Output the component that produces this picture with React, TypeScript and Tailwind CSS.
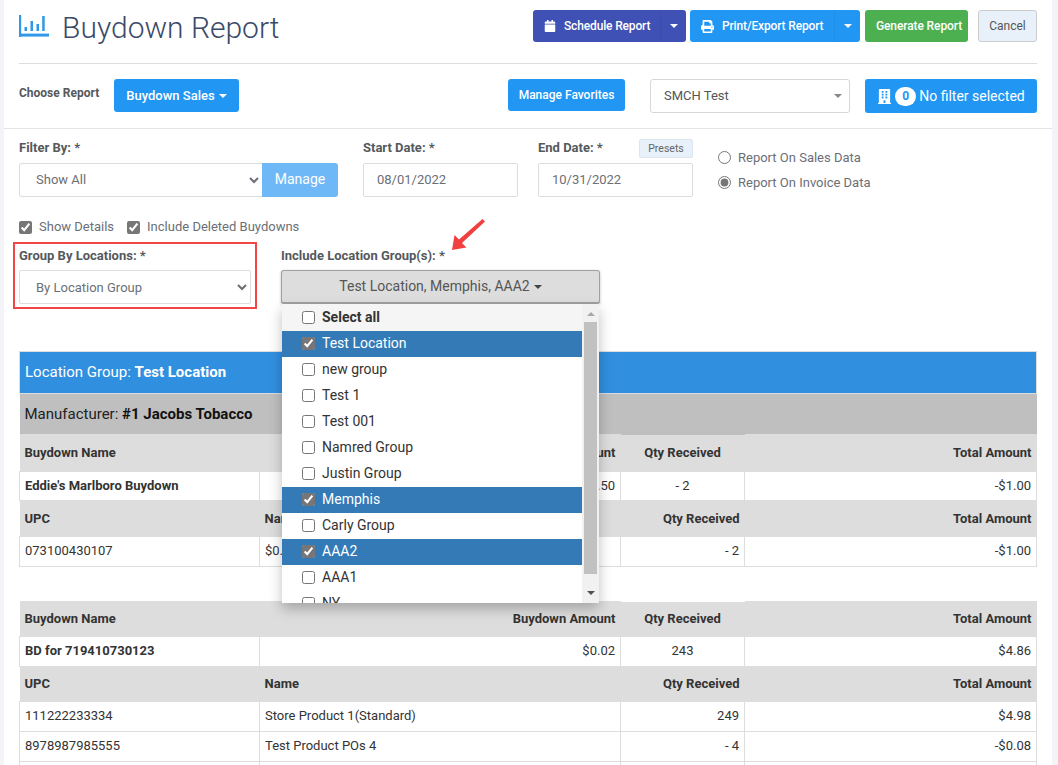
import { FaBuilding, FaCalendar, FaPrint } from 'react-icons/fa';

const locationGroups = [
  { name: 'Test Location', checked: true },
  { name: 'new group', checked: false },
  { name: 'Test 1', checked: false },
  { name: 'Test 001', checked: false },
  { name: 'Namred Group', checked: false },
  { name: 'Justin Group', checked: false },
  { name: 'Memphis', checked: true },
  { name: 'Carly Group', checked: false },
  { name: 'AAA2', checked: true },
  { name: 'AAA1', checked: false },
  { name: 'NY', checked: false },
];

const Caret = ({ className = 'border-t-white' }: { className?: string }) => (
  <span className={`inline-block w-0 h-0 border-x-[4px] border-x-transparent border-t-[4px] ${className}`} />
);

const Label = ({ children, className = '' }: { children: React.ReactNode; className?: string }) => (
  <label className={`block h-[24px] text-[13px] font-bold text-[#55595c] leading-[17px] ${className}`}>{children}</label>
);

const Check = ({ label }: { label: string }) => (
  <label className="flex items-center gap-[7px] text-[13px] text-[#6b6f76]">
    <input type="checkbox" defaultChecked readOnly className="m-0 w-[13px] h-[13px] accent-[#767676]" />
    {label}
  </label>
);

const Radio = ({ label, checked }: { label: string; checked?: boolean }) => (
  <label className="flex items-center gap-[7px] text-[13px] text-[#6b6f76] h-[25px]">
    <input type="radio" name="source" defaultChecked={checked} className="m-0 w-[13px] h-[13px] accent-[#767676]" />
    {label}
  </label>
);

const SplitButton = ({ icon, label, className, width }: { icon: React.ReactNode; label: string; className: string; width: string }) => (
  <div className={`flex h-[32px] rounded-[3px] text-white text-[12px] font-medium tracking-[-0.15px] ${className} ${width}`}>
    <button className="flex flex-1 items-center gap-[8px] pl-[11px]">
      {icon}
      {label}
    </button>
    <button className="flex w-[26px] items-center justify-center border-l border-black/5">
      <Caret />
    </button>
  </div>
);

const Head = ({ children, right }: { children?: React.ReactNode; right?: boolean }) => (
  <th className={`bg-[#dddddd] border-y border-[#dddddd] px-[5px] text-[13px] font-bold text-[#333] ${right ? 'text-right' : 'text-left'}`}>{children}</th>
);

const Cell = ({ children, align = 'left', bold }: { children?: React.ReactNode; align?: 'left' | 'right' | 'center'; bold?: boolean }) => (
  <td
    className={`border border-[#dddddd] px-[5px] pb-[1px] text-[13px] text-[#333] ${
      align === 'right' ? 'text-right' : align === 'center' ? 'text-center' : 'text-left'
    } ${bold ? 'font-bold' : ''}`}
  >
    {children}
  </td>
);

const Cols = () => (
  <colgroup>
    <col className="w-[240px]" />
    <col className="w-[361px]" />
    <col className="w-[124px]" />
    <col />
  </colgroup>
);

export default function App() {
  return (
    <div className="h-[765px] overflow-hidden bg-[#f3f3f8] font-['Roboto',sans-serif]">
      <div className="ml-[4px] mr-[6px] h-full bg-white">
        <div className="h-[129px] border-b border-[#e4e4e4] px-[15px]">
          <div className="flex h-[64px] border-b border-[#dddddd] pt-[10px]">
            <svg width="30" height="22" viewBox="0 0 30 22" className="mt-[5px] text-[#3198e8]" fill="currentColor">
              <rect x="0" y="0" width="2.2" height="22" />
              <rect x="0" y="18.6" width="30" height="3" />
              <rect x="5.5" y="12" width="2.5" height="4" />
              <rect x="11.5" y="6" width="2.5" height="10" />
              <rect x="17.5" y="9" width="2.5" height="7" />
              <rect x="23.2" y="1" width="2.5" height="15" />
            </svg>
            <h1 className="ml-[13px] mt-[1px] text-[30px] font-light leading-[34px] text-[#3b4a68]">Buydown Report</h1>
            <div className="ml-auto flex">
              <SplitButton icon={<FaCalendar size={12} />} label="Schedule Report" className="bg-[#3f51b5]" width="w-[153px]" />
              <SplitButton icon={<FaPrint size={13} />} label="Print/Export Report" className="ml-[4px] bg-[#2196f3]" width="w-[170px]" />
              <button className="ml-[5px] h-[32px] w-[103px] rounded-[3px] bg-[#4caf50] pl-[5px] text-[12px] font-medium tracking-[-0.1px] text-white">Generate Report</button>
              <button className="ml-[10px] h-[32px] w-[59px] rounded-[3px] border border-[#cccccc] bg-[#e8f1fa] text-[12px] text-[#555]">Cancel</button>
            </div>
          </div>
          <div className="flex items-start pt-[15px]">
            <span className="mt-[5px] w-[95px] text-[12px] font-bold text-[#55595c]">Choose Report</span>
            <button className="flex h-[33px] w-[125px] items-center justify-center gap-[4px] rounded-[3px] bg-[#2196f3] text-[13px] font-medium text-white">
              Buydown Sales <Caret />
            </button>
            <button className="ml-[269px] h-[32px] w-[117px] rounded-[3px] bg-[#2196f3] text-[12px] font-medium text-white">Manage Favorites</button>
            <div className="ml-[25px] flex h-[34px] w-[200px] items-center justify-between rounded-[3px] border border-[#d8d8d8] pl-[13px] pr-[7px] text-[13px] text-[#555]">
              SMCH Test
              <Caret className="border-t-[#888888]" />
            </div>
            <button className="ml-[15px] flex h-[34px] w-[172px] items-center justify-center gap-[3px] rounded-[3px] bg-[#2196f3] text-[14px] text-white">
              <FaBuilding size={15} />
              <span className="flex h-[19px] w-[21px] items-center justify-center rounded-full bg-white text-[12px] font-bold text-[#2196f3]">0</span>
              No filter selected
            </button>
          </div>
        </div>

        <div className="px-[15px] pt-[10px]">
          <div className="flex">
            <div className="w-[319px]">
              <Label>Filter By: *</Label>
              <div className="flex h-[34px]">
                <select className="h-full flex-1 rounded-l-[3px] border border-r-0 border-[#dddddd] bg-white pb-[1px] pl-[12px] pr-[4px] text-[13px] text-[#6b6f76]">
                  <option>Show All</option>
                </select>
                <button className="h-full w-[76px] rounded-r-[3px] bg-[#6fb8f7] pb-[1px] text-[14px] text-white">Manage</button>
              </div>
            </div>
            <div className="ml-[25px] w-[155px]">
              <Label>Start Date: *</Label>
              <input readOnly value="08/01/2022" className="h-[34px] w-full rounded-[2px] border border-[#dddddd] pb-[1px] px-[13px] text-[13px] text-[#6b6f76]" />
            </div>
            <div className="ml-[20px] w-[155px]">
              <div className="flex items-start justify-between">
                <Label>End Date: *</Label>
                <button className="h-[19px] w-[54px] rounded-[2px] border border-[#dde5ee] bg-[#e8f1fa] text-[10.5px] text-[#666]">Presets</button>
              </div>
              <input readOnly value="10/31/2022" className="h-[34px] w-full rounded-[2px] border border-[#dddddd] pb-[1px] px-[13px] text-[13px] text-[#6b6f76]" />
            </div>
            <div className="ml-[25px] pt-[6px]">
              <Radio label="Report On Sales Data" />
              <Radio label="Report On Invoice Data" checked />
            </div>
          </div>

          <div className="mt-[21px] flex h-[18px] gap-[13px]">
            <Check label="Show Details" />
            <Check label="Include Deleted Buydowns" />
          </div>

          <div className="relative mt-[10px] flex h-[58px]">
            <div className="relative w-[232px]">
              <div className="absolute -left-[6px] -right-[6px] -top-[4px] -bottom-[5px] border-2 border-[#f24545]" />
              <Label className="pt-[1px]">Group By Locations: *</Label>
              <select className="h-[34px] w-full rounded-[2px] border border-[#dddddd] bg-white pl-[12px] pr-[4px] text-[13px] text-[#6b6f76]">
                <option>By Location Group</option>
              </select>
            </div>
            <div className="relative ml-[30px] w-[319px]">
              <Label className="pt-[1px]">Include Location Group(s): *</Label>
              <svg width="34" height="32" viewBox="0 0 34 32" className="absolute left-[170px] -top-[28px]" fill="#f04040">
                <path d="M31.5 1 L34 3.5 L11 25 L15.5 29.5 L1 32 L3.5 17 L8 21.5 Z" />
              </svg>
              <button className="flex h-[34px] w-full items-center justify-center gap-[4px] rounded-[3px] border border-[#a0a0a0] border-b-2 bg-[#dddddd] text-[14px] text-[#555] shadow-[0_1px_3px_rgba(0,0,0,0.25)]">
                Test Location, Memphis, AAA2 <Caret className="border-t-[#444444]" />
              </button>
              <div className="absolute left-[1px] top-[58px] z-10 flex h-[299px] w-[317px] overflow-hidden bg-white shadow-[0_6px_12px_rgba(0,0,0,0.25)]">
                <ul className="flex-1 text-[14px] text-[#333]">
                  <li className="flex h-[27px] items-center gap-[7px] bg-[#f5f5f5] pl-[20px] font-bold">
                    <input type="checkbox" className="m-0 w-[13px] h-[13px] accent-[#767676]" />
                    Select all
                  </li>
                  {locationGroups.map((group) => (
                    <li key={group.name} className={`flex h-[26px] shrink-0 items-center gap-[7px] pb-[2px] pl-[20px] ${group.checked ? 'bg-[#337ab7] text-white' : ''}`}>
                      <input type="checkbox" defaultChecked={group.checked} className="m-0 w-[13px] h-[13px] accent-[#767676]" />
                      {group.name}
                    </li>
                  ))}
                </ul>
                <div className="flex w-[17px] flex-col items-center bg-[#f1f1f1]">
                  <span className="mt-[8px] h-0 w-0 border-x-[4px] border-b-[4px] border-x-transparent border-b-[#a8a8a8]" />
                  <div className="mt-[6px] h-[252px] w-[13px] bg-[#c1c1c1]" />
                  <Caret className="mt-[17px] border-t-[#505050]" />
                </div>
              </div>
            </div>
          </div>

          <table className="mt-[47px] w-full table-fixed border-collapse">
            <Cols />
            <tbody>
              <tr className="h-[42px]">
                <td colSpan={4} className="border border-[#dddddd] bg-[#318fe0] px-[5px] text-[15px] text-white">
                  Location Group: <b>Test Location</b>
                </td>
              </tr>
              <tr className="h-[41px]">
                <td colSpan={4} className="bg-[#bfbfbf] px-[5px] text-[15px] text-[#222]">
                  Manufacturer: <b className="text-[#111]">#1 Jacobs Tobacco</b>
                </td>
              </tr>
              <tr className="h-[37px]">
                <Head>Buydown Name</Head>
                <Head right>Buydown Amount</Head>
                <th className="bg-[#dddddd] text-center text-[13px] font-bold text-[#333]">Qty Received</th>
                <Head right>Total Amount</Head>
              </tr>
              <tr className="h-[29px]">
                <Cell bold>Eddie's Marlboro Buydown</Cell>
                <Cell align="right">$0.50</Cell>
                <Cell align="center">- 2</Cell>
                <Cell align="right">-$1.00</Cell>
              </tr>
              <tr className="h-[36px]">
                <Head>UPC</Head>
                <Head>Name</Head>
                <Head right>Qty Received</Head>
                <Head right>Total Amount</Head>
              </tr>
              <tr className="h-[30px]">
                <Cell>073100430107</Cell>
                <Cell>$0.50</Cell>
                <Cell align="right">- 2</Cell>
                <Cell align="right">-$1.00</Cell>
              </tr>
            </tbody>
          </table>

          <table className="mt-[34px] w-full table-fixed border-collapse">
            <Cols />
            <tbody>
              <tr className="h-[35px]">
                <Head>Buydown Name</Head>
                <Head right>Buydown Amount</Head>
                <th className="bg-[#dddddd] text-center text-[13px] font-bold text-[#333]">Qty Received</th>
                <Head right>Total Amount</Head>
              </tr>
              <tr className="h-[30px]">
                <Cell bold>BD for 719410730123</Cell>
                <Cell align="right">$0.02</Cell>
                <Cell align="center">243</Cell>
                <Cell align="right">$4.86</Cell>
              </tr>
              <tr className="h-[35px]">
                <Head>UPC</Head>
                <Head>Name</Head>
                <Head right>Qty Received</Head>
                <Head right>Total Amount</Head>
              </tr>
              <tr className="h-[30px]">
                <Cell>111222233334</Cell>
                <Cell>Store Product 1(Standard)</Cell>
                <Cell align="right">249</Cell>
                <Cell align="right">$4.98</Cell>
              </tr>
              <tr className="h-[30px]">
                <Cell>8978987985555</Cell>
                <Cell>Test Product POs 4</Cell>
                <Cell align="right">- 4</Cell>
                <Cell align="right">-$0.08</Cell>
              </tr>
              <tr className="h-[30px]">
                <Cell />
                <Cell />
                <Cell />
                <Cell />
              </tr>
            </tbody>
          </table>
        </div>
      </div>
    </div>
  );
}
